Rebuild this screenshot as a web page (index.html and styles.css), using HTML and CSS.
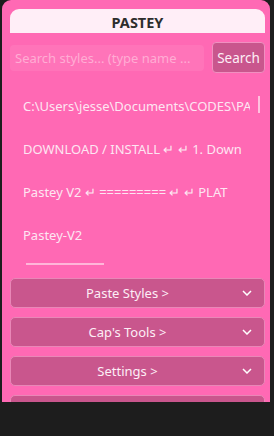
FILE: index.html
```html
<!DOCTYPE html>
<html lang="en">
<head>
    <meta charset="UTF-8">
    <title>Pastey</title>
    <link rel="stylesheet" href="styles.css">
</head>
<body>
    <div class="app">
        <header class="title">PASTEY</header>

        <!-- Search row -->
        <div class="search-row">
            <input type="text" class="search-box" placeholder="Search styles... (type name ...">
            <button class="search-btn">Search</button>
        </div>

        <!-- Clipboard history -->
        <div class="history">
            <div class="history-list">
                <div class="history-item">C:\Users\jesse\Documents\CODES\PA</div>
                <div class="history-item">DOWNLOAD / INSTALL ↵ ↵ 1. Down</div>
                <div class="history-item">Pastey V2 ↵ ========= ↵ ↵ PLAT</div>
                <div class="history-item">Pastey-V2</div>
                <div class="hscroll"><span></span></div>
            </div>
            <div class="vscroll"><span></span></div>
        </div>

        <!-- Sections -->
        <div class="sections">
            <button class="section">Paste Styles &gt;<svg viewBox="0 0 10 6"><path d="M1 1l4 4 4-4"/></svg></button>
            <button class="section">Cap's Tools &gt;<svg viewBox="0 0 10 6"><path d="M1 1l4 4 4-4"/></svg></button>
            <button class="section">Settings &gt;<svg viewBox="0 0 10 6"><path d="M1 1l4 4 4-4"/></svg></button>
            <button class="section"></button>
        </div>
    </div>
</body>
</html>
```

FILE: styles.css
```css
body {
    margin: 0;
    background-color: #1d1d1d;
    font-family: "Noto Sans", "Open Sans", sans-serif;
    height: 436px;
    overflow: hidden;
}

.app {
    margin-left: 2px;
    width: 268px;
    height: 402px;
    box-sizing: border-box;
    padding: 9px 5px 0 8px;
    background-color: #ff69b4;
    border-radius: 9px 9px 0 0;
    overflow: hidden;
}

.title {
    height: 24px;
    line-height: 26px;
    background-color: #ffeef7;
    border-radius: 9px 9px 0 0;
    text-align: center;
    font-weight: bold;
    font-size: 14.5px;
    color: #2d2d2d;
}

.search-row {
    display: flex;
    align-items: center;
    gap: 8px;
    margin-top: 9px;
}

.search-box {
    width: 194px;
    height: 26px;
    box-sizing: border-box;
    padding: 0 5px;
    border: none;
    border-radius: 4px;
    background-color: rgba(255, 255, 255, 0.08);
    font-family: inherit;
    font-size: 13px;
    color: #fff;
    outline: none;
    text-overflow: ellipsis;
}

.search-box::placeholder {
    color: #ffadd4;
}

.search-btn {
    width: 53px;
    height: 31px;
    padding: 0;
    border: 1px solid #f090c0;
    border-radius: 4px;
    background-color: #c9568d;
    color: #fdeef6;
    font-family: inherit;
    font-size: 13.5px;
}

.history {
    display: flex;
    margin-top: 13px;
}

.history-list {
    width: 240px;
}

.history-item {
    height: 43px;
    line-height: 40px;
    padding-left: 13px;
    white-space: nowrap;
    overflow: hidden;
    font-size: 13px;
    color: #fde6f2;
}

.hscroll {
    padding: 5px 0 0 16px;
}

.hscroll span {
    display: block;
    width: 78px;
    height: 2px;
    background-color: #ffb6d9;
}

.vscroll {
    padding: 10px 0 0 8px;
}

.vscroll span {
    display: block;
    width: 2px;
    height: 17px;
    background-color: #ffc2df;
}

.sections {
    display: flex;
    flex-direction: column;
    gap: 9px;
    margin-top: 13px;
}

.section {
    position: relative;
    flex-shrink: 0;
    width: 255px;
    height: 30px;
    padding: 0 20px 0 0;
    border: 1px solid #e987b7;
    border-radius: 5px;
    background-color: #c9568d;
    color: #fdeef6;
    font-family: inherit;
    font-size: 13px;
}

.section svg {
    position: absolute;
    right: 12px;
    top: 11px;
    width: 10px;
    height: 6px;
    fill: none;
    stroke: #fff;
    stroke-width: 1.5;
}
```
